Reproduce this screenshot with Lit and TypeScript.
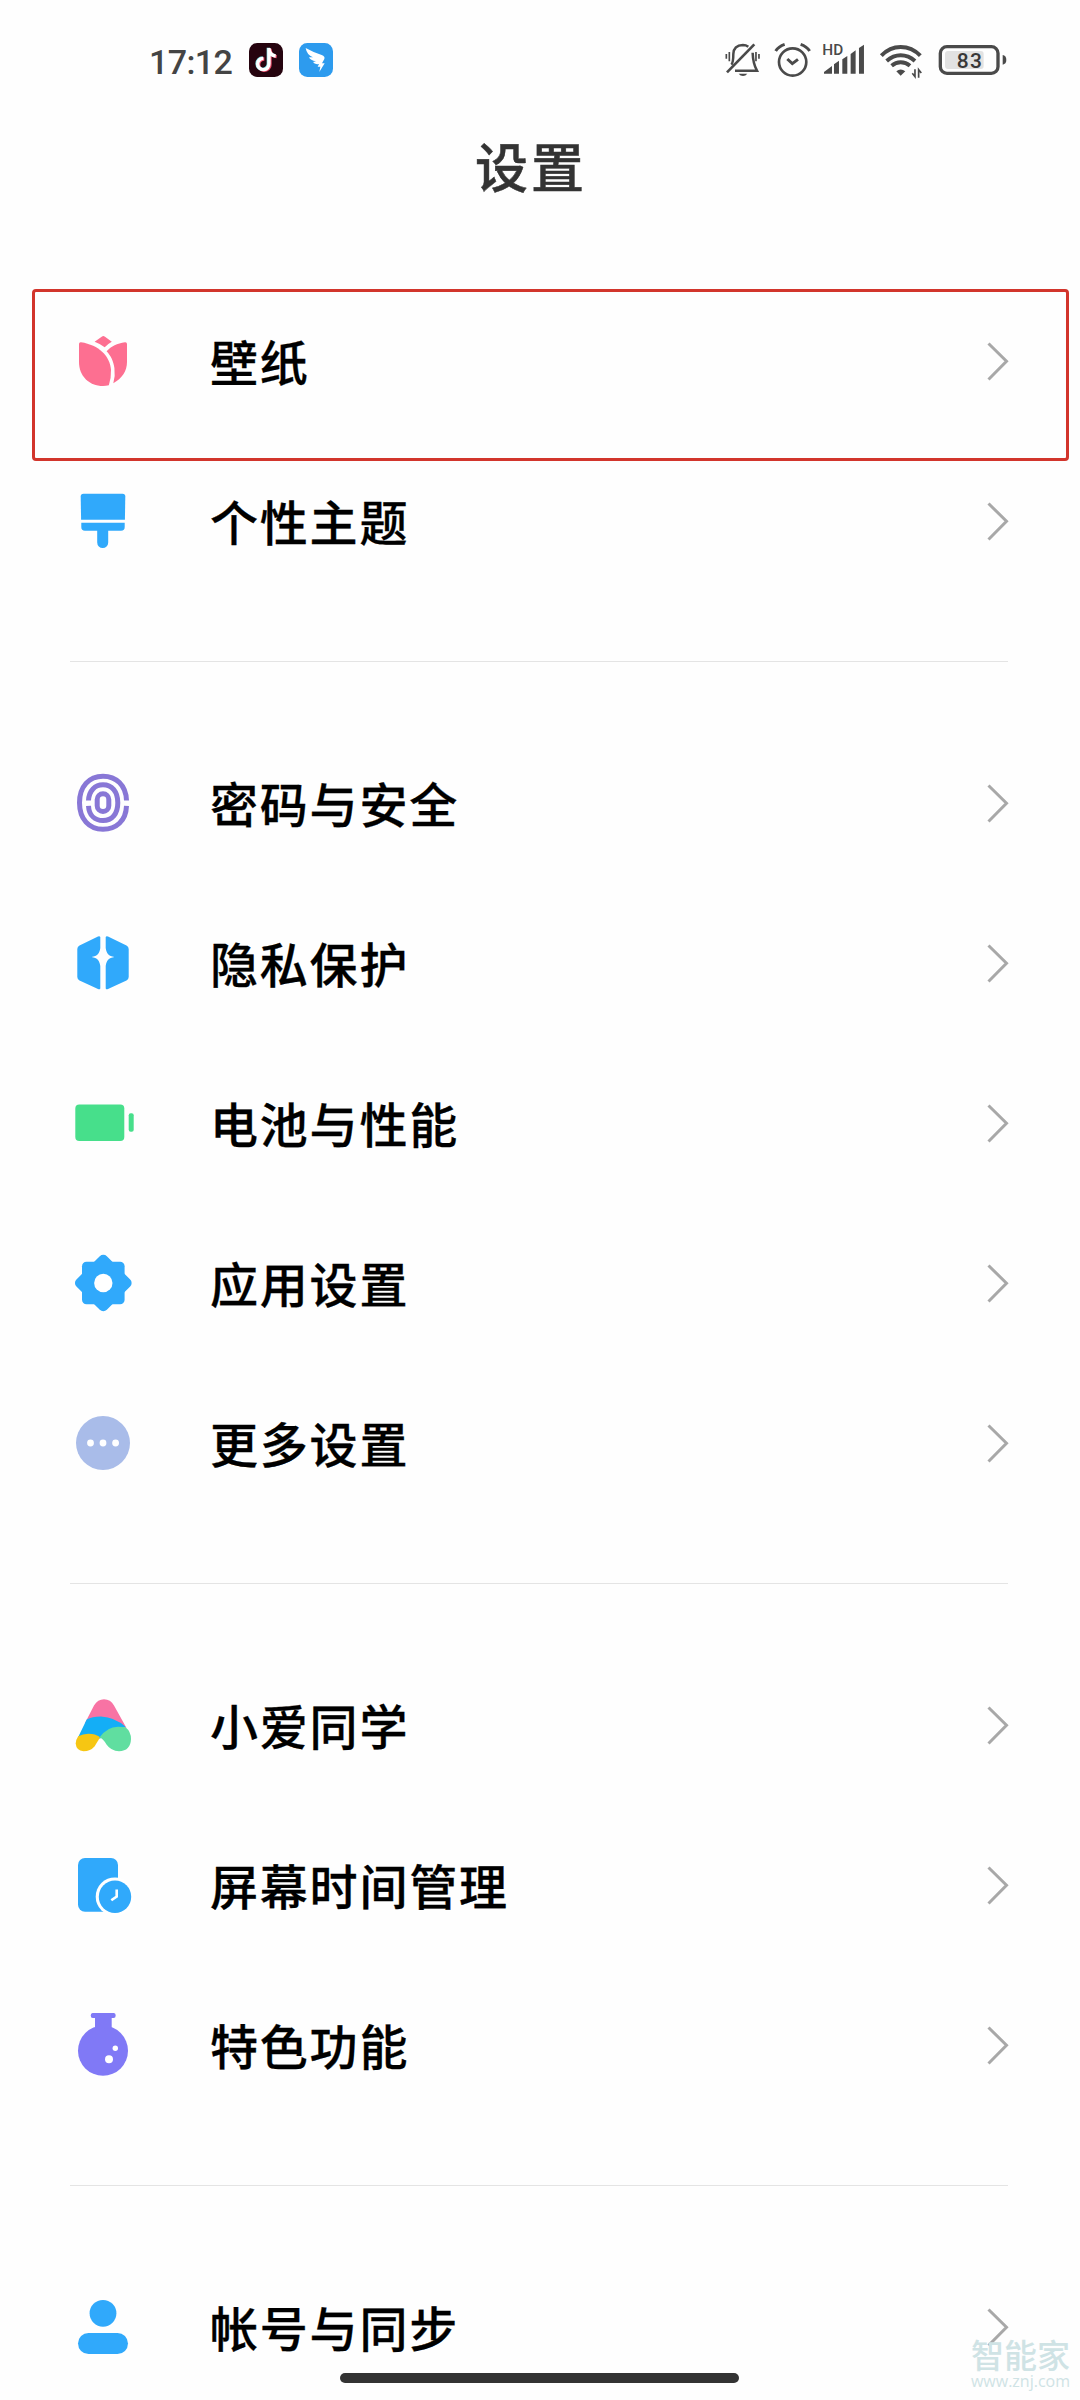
import { LitElement, html, svg, css, nothing } from "lit";
import { customElement, property } from "lit/decorators.js";

const BLUE = "#30a9fb";

const ICONS: Record<string, unknown> = {
  wallpaper: svg`<g fill="#fd6f91">
    <path d="M32.3 7 Q33 7 34 7.8 L40.8 12.8 Q36.5 15.2 33.7 18.3 Q29.500 15 23.600 12.800 L30.700 7.800 Q31.600 7 32.300 7Z"/>
    <path d="M8 15 Q8 13 10 13.200 C28 16 39 27 40 41 Q40.300 49 37.800 56.200 Q35 57 32 57 C18 57 8 47 8 33Z"/>
    <path d="M35.600 22.200 C40.500 17 46 14.500 54 13.200 Q56 13 56 15 V33 C56 42 51 49.500 42.300 54.300 Q44.500 47 43.400 39 C42.400 32 40 27 35.600 22.200Z"/></g>`,
  theme: svg`<g fill="${BLUE}">
    <path d="M12.500 4.700 H51.500 Q54.300 4.700 54.300 7.500 L53.900 30.700 H10.100 L9.700 7.500 Q9.700 4.700 12.500 4.700Z"/>
    <path d="M10.300 33.700 H53.700 V38 Q53.700 41.800 50 41.800 H37.200 V53.600 A5.500 5.500 0 0 1 26.200 53.600 V41.800 H14 Q10.300 41.800 10.300 38Z"/></g>`,
  security: svg`<g fill="none" stroke="#8877d6" stroke-width="5">
    <path d="M55.500 29.500 C55 14 45 5.200 32 5.200 C18 5.200 8.500 15.500 8.500 31.700 C8.500 48 18 58.200 32 58.200 C45 58.200 55 50 55.500 34.800"/>
    <path d="M17.500 29.500 C18 19.500 24 13.800 32 13.800 C41 13.800 46.800 20.500 46.800 31.700 C46.800 43 41 49.500 32 49.500 C24 49.500 18 44.500 17.500 34.800"/>
    <rect x="26.200" y="22.700" width="11.600" height="17.800" rx="5.800"/></g>`,
  privacy: svg`<g fill="${BLUE}">
    <path d="M29.300 6 V17 C28.500 22.500 26.500 25 20.500 26 C26.500 27 28.500 29.500 29.300 35 V57.500 Q28.500 58.900 27 58 L8.500 49.500 Q6.300 48.300 6.300 46 V18 Q6.300 15.800 8.500 14.600 L27 5.500 Q28.700 4.800 29.300 6Z"/>
    <path d="M34.700 6 V17 C35.500 22.500 37.500 25 43.500 26 C37.500 27 35.500 29.500 34.700 35 V57.500 Q35.500 58.900 37 58 L55.500 49.500 Q57.700 48.300 57.700 46 V18 Q57.700 15.800 55.500 14.600 L37 5.500 Q35.300 4.800 34.700 6Z"/></g>`,
  battery: svg`<g fill="#47df8b"><rect x="4.300" y="13.500" width="49" height="36.500" rx="4"/>
    <rect x="57.700" y="22.300" width="5" height="18.400" rx="2"/></g>`,
  apps: svg`<g fill="${BLUE}"><rect x="11" y="10.700" width="42.600" height="42.600" rx="4.500"/>
    <rect x="10.800" y="10.500" width="43" height="43" rx="5" transform="rotate(45 32.300 32)"/></g>
    <circle cx="32.300" cy="32" r="9.200" fill="#fff"/>`,
  more: svg`<circle cx="32" cy="32" r="27" fill="#a9bce9"/>
    <g fill="#fff"><circle cx="19.500" cy="32" r="3.400"/><circle cx="32" cy="32" r="3.400"/><circle cx="44.600" cy="32" r="3.400"/></g>`,
  xiaoai: svg`<path fill="#f873a4" d="M14 30 L23 12.500 Q26.800 6.300 33 6.300 Q39.500 6.300 43 12.500 L55.500 35 L30 30Z"/>
    <path fill="#14aef6" d="M15.700 26.500 Q21 23.500 30 23.500 Q44 24.200 54.500 33.800 L46 38 L34 43 L29 45.500 L20 45 L7.200 44Z"/>
    <path fill="#f6c613" d="M7.200 43.300 Q13 40 21 41 Q27 42 29 44.500 L23.500 53.500 Q19.500 58.200 12.500 58.200 Q5.200 57.500 4.700 50.500 Q4.700 47 7.200 43.300Z"/>
    <path fill="#60dea0" d="M28.500 44.500 Q36 33.700 47 33.700 Q51.500 33.700 54.500 34.200 Q60 38.500 60 46 Q59.500 58 48 58.200 Q40 58 35.500 51.500 Q32 45.500 28.500 44.500Z"/>`,
  screentime: svg`<rect x="7" y="5" width="40" height="53.700" rx="7" fill="${BLUE}"/>
    <circle cx="44" cy="43.700" r="19.300" fill="#fff"/><circle cx="44" cy="43.700" r="16.200" fill="${BLUE}"/>
    <path d="M45.700 36.500 V43.500 L40.300 47.300" fill="none" stroke="#fff" stroke-width="2.600"/>`,
  special: svg`<g fill="#8079f6"><circle cx="32" cy="37.700" r="25"/>
    <path d="M21.500 0 H43 Q44.700 0 44.700 2.500 Q44.700 5 42.500 5 H40.700 V16 H24 V5 H21.800 Q19.700 5 19.700 2.500 Q19.700 0 21.500 0Z"/></g>
    <circle cx="44.300" cy="35.300" r="2.700" fill="#fff"/><circle cx="38" cy="46.300" r="4" fill="#fff"/>`,
  account: svg`<g fill="${BLUE}"><circle cx="32" cy="18.300" r="13.400"/><rect x="7" y="38" width="50" height="21" rx="10.500"/></g>`,
};

interface Item { icon: string; label: string; marked?: boolean; }

const GROUPS: Item[][] = [
  [
    { icon: "wallpaper", label: "壁纸", marked: true },
    { icon: "theme", label: "个性主题" },
  ],
  [
    { icon: "security", label: "密码与安全" },
    { icon: "privacy", label: "隐私保护" },
    { icon: "battery", label: "电池与性能" },
    { icon: "apps", label: "应用设置" },
    { icon: "more", label: "更多设置" },
  ],
  [
    { icon: "xiaoai", label: "小爱同学" },
    { icon: "screentime", label: "屏幕时间管理" },
    { icon: "special", label: "特色功能" },
  ],
  [{ icon: "account", label: "帐号与同步" }],
];

@customElement("status-bar")
export class StatusBar extends LitElement {
  static styles = css`
    :host { display: flex; align-items: center; justify-content: space-between;
      height: 120px; padding: 0 73.300px 0 149px; color: #444; }
    .left, .right { display: flex; align-items: center; }
    .time { font: 500 34px/40px Roboto, "Noto Sans", sans-serif; width: 100px; letter-spacing: -0.600px; white-space: nowrap; padding-top: 3px; }
    .app { width: 34px; height: 34px; margin-right: 16px; display: block; }
    .right { gap: 12px; }
    .right svg { display: block; height: 40px; }
    .alarm { margin-left: 1.300px; }
    .signal { margin-left: -1.300px; }
    .wifi { margin-left: 2px; }
    .hd { font: 500 46px Roboto, sans-serif; }
    .level { font: 500 63px Roboto, sans-serif; }
  `;
  render() {
    return html`
      <div class="left">
        <span class="time">17:12</span>
        <svg class="app" viewBox="0 0 102 102">
          <rect width="102" height="102" rx="25" fill="#26040f"/>
          <g fill="none" stroke-width="10">
            <path d="M60 15 V62 A17 17 0 1 1 43 46 M60 17 Q62 37 80 39" stroke="#f0506e" transform="translate(3 2)"/>
            <path d="M60 15 V62 A17 17 0 1 1 43 46 M60 17 Q62 37 80 39" stroke="#7fe6ea" transform="translate(-2 -1)"/>
            <path d="M60 15 V62 A17 17 0 1 1 43 46 M60 17 Q62 37 80 39" stroke="#fff"/>
          </g>
        </svg>
        <svg class="app" viewBox="0 0 102 102">
          <rect width="102" height="102" rx="25" fill="#2d9bee"/>
          <path fill="#fff" d="M20 15 Q45 29 68 36 Q79 40 76 48 L69 61 H77 L61 87 L64 71 H56 L60 63 Q46 65 42 57 L51 55 Q34 52 30 43 L42 43 Q23 35 20 15Z"/>
        </svg>
      </div>
      <div class="right">
        <svg width="37.300" viewBox="40 30 112 120" fill="none" stroke="#4a4a4a" stroke-width="7.500">
          <path d="M62 104 Q68 98 68 72 Q69 46 97 45 Q106 45 113 50 M126 68 Q127 100 139 122 H73"/>
          <path d="M49 127 L131 43" stroke-width="8"/>
          <path d="M84 131 H110 Q105 138 97 138 Q89 138 84 131Z" fill="#4a4a4a" stroke="none"/>
          <path d="M47 72 V86 M56 66 V94 M136 66 V94 M145 72 V86" stroke-width="5"/>
        </svg>
        <svg class="alarm" width="37.300" viewBox="192 30 112 120" fill="none" stroke="#4a4a4a" stroke-width="8">
          <circle cx="248" cy="96" r="41"/>
          <path d="M232 87 L247 101 L264 88 M197 63 Q206 49 224 43 M272 43 Q290 49 299 63" stroke-width="9"/>
        </svg>
        <svg class="signal" width="43.300" viewBox="336 30 130 120" fill="#4a4a4a">
          <text class="hd" x="337" y="75">HD</text>
          <path d="M342 131 V126 L366 108 V131Z M372 131 V103 L387 92 V131Z M397 131 V88 L412 78 V131Z M422 131 V72 L437 61 V131Z M447 131 V54 L462 44 V131Z"/>
        </svg>
        <svg class="wifi" width="43.300" viewBox="508 30 130 120" fill="none" stroke="#4a4a4a" stroke-width="12">
          <path d="M515 77 Q540 51 573 51 Q607 51 632 77 M531 93 Q550 76 573 76 Q597 76 616 93 M546 107 Q558 97 573 97 Q589 97 601 107"/>
          <path d="M560 124 Q573 113 587 124 L573 137Z" fill="#4a4a4a" stroke="none"/>
          <path d="M616 118 V140 L608 130 M627 143 V119 L635 129" stroke-width="5"/>
        </svg>
        <svg width="72" viewBox="674 30 216 120">
          <rect x="704" y="63" width="116" height="54" rx="9" fill="#e2e2e2"/>
          <rect x="690" y="50" width="173" height="80" rx="20" fill="none" stroke="#4a4a4a" stroke-width="10"/>
          <path d="M877 75 Q888 77 888 90 Q888 102 877 104Z" fill="#4a4a4a"/>
          <text class="level" x="777" y="114" text-anchor="middle" textLength="75" fill="#383838">83</text>
        </svg>
      </div>`;
  }
}

@customElement("settings-row")
export class SettingsRow extends LitElement {
  @property() icon = "";
  @property() label = "";
  @property({ type: Boolean }) marked = false;
  static styles = css`
    :host { display: flex; align-items: center; height: 160px; padding: 0 71px; position: relative; }
    .icon { width: 64px; height: 64px; flex: none; margin-right: 75px; overflow: visible; }
    .label { flex: 1; font: 500 48px/70px "Noto Sans CJK SC", sans-serif; letter-spacing: 1.800px; color: #000; white-space: nowrap; padding-bottom: 3px; -webkit-text-stroke: 0.300px #000; }
    .chevron { width: 24px; height: 40px; flex: none; }
    .mark { position: absolute; left: 32px; right: 11px; top: 8px; height: 172px;
      box-sizing: border-box; border: 3px solid #d2352c; border-radius: 4px; z-index: 1; }
  `;
  render() {
    return html`
      <svg class="icon" viewBox="0 0 64 64">${ICONS[this.icon]}</svg>
      <span class="label">${this.label}</span>
      <svg class="chevron" viewBox="0 0 24 40" fill="none" stroke="#a8a8a8" stroke-width="3">
        <path d="M3.500 2.500 L21.500 20.300 L3.500 38.500"/>
      </svg>
      ${this.marked ? html`<div class="mark"></div>` : nothing}`;
  }
}

@customElement("app-root")
export class AppRoot extends LitElement {
  static styles = css`
    :host { display: block; position: relative; width: 1080px; height: 2400px; overflow: hidden; background: #fefefe; }
    .title { margin: 0; height: 161px; display: flex; justify-content: center; box-sizing: border-box; padding-right: 18px;
      font: 500 53px/90px "Noto Sans CJK SC", sans-serif; letter-spacing: 3px; color: #333; -webkit-text-stroke: 0.500px #333; }
    .divider { height: 1px; margin: 60px 72px 61px 70px; background: #e4e4e4; }
    .home { position: absolute; left: 340px; top: 2373px; width: 399px; height: 10px; border-radius: 5px; background: #333; }
    .watermark { position: absolute; left: 970px; top: 2335px; width: 101px; display: flex; flex-direction: column; align-items: center; color: #cfe3e5; white-space: nowrap; }
    .brand { font: 500 33px/38px "Noto Sans CJK SC", sans-serif; }
    .url { font: 400 16px/16px "Open Sans", sans-serif; }
  `;
  render() {
    return html`
      <status-bar></status-bar>
      <h1 class="title">设置</h1>
      ${GROUPS.map((g, i) => html`
        ${i ? html`<div class="divider"></div>` : nothing}
        ${g.map((r) => html`<settings-row .icon=${r.icon} .label=${r.label} .marked=${!!r.marked}></settings-row>`)}`)}
      <div class="watermark"><span class="brand">智能家</span><span class="url">www.znj.com</span></div>
      <div class="home"></div>`;
  }
}
